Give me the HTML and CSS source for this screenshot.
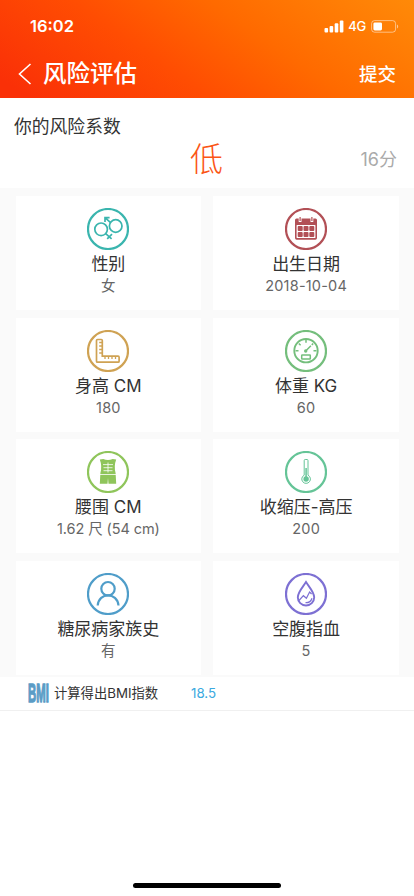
FILE: index.html
```html
<!DOCTYPE html>
<html lang="zh-CN">

<head>
    <meta charset="UTF-8">
    <meta name="viewport" content="width=device-width, initial-scale=1.0">
    <title>风险评估</title>
    <link rel="stylesheet" href="styles.css">
</head>

<body>
    <div class="page">
        <header class="header">
            <div class="status">
                <span class="time">16:02</span>
                <div class="signals">
                    <svg class="bars" width="20" height="13" viewBox="0 0 20 13" fill="#fff">
                        <rect x="0.5" y="8" width="3.6" height="4.5" rx="1" />
                        <rect x="5.6" y="6" width="3.6" height="6.5" rx="1" />
                        <rect x="10.7" y="3.3" width="3.6" height="9.2" rx="1" />
                        <rect x="15.8" y="0.5" width="3.6" height="12" rx="1" />
                    </svg>
                    <span class="network">4G</span>
                    <svg class="battery" width="28" height="13" viewBox="0 0 28 13">
                        <rect x="0.6" y="0.6" width="24" height="11.6" rx="3" fill="none" stroke="#fff" stroke-opacity="0.5" />
                        <rect x="2.4" y="2.4" width="8.6" height="8" rx="1.4" fill="#fff" />
                        <path d="M26 4.4c1.6.6 1.6 3.4 0 4z" fill="#fff" fill-opacity="0.55" />
                    </svg>
                </div>
            </div>
            <div class="nav">
                <svg class="back" width="14" height="22" viewBox="0 0 14 22" fill="none" stroke="#fff" stroke-width="1.6">
                    <path d="M12.5 1L1.5 11l11 10" />
                </svg>
                <h1>风险评估</h1>
                <span class="submit">提交</span>
            </div>
        </header>

        <section class="risk">
            <h2>你的风险系数</h2>
            <div class="result">
                <span class="level">低</span>
                <span class="score">16分</span>
            </div>
        </section>

        <section class="grid">
            <div class="card">
                <svg class="icon teal" viewBox="0 0 42 42">
                    <circle cx="21" cy="21" r="20" />
                    <g stroke-width="1.7">
                        <circle cx="14.1" cy="21.3" r="6.3" />
                        <circle cx="28.7" cy="18" r="6.3" />
                        <path d="M18 9.7l5.6 4.9M18 14v-4.3h4.6M18.4 25.4l6.2 5.5M20.2 30.8l4.8-4.6" />
                    </g>
                </svg>
                <h3>性别</h3>
                <p>女</p>
            </div>
            <div class="card">
                <svg class="icon red" viewBox="0 0 42 42">
                    <circle cx="21" cy="21" r="20" />
                    <path class="solid" d="M11.5 10.5h2.2v3.4h2.8v-3.4h9v3.4h2.8v-3.4h2.2q1.5 0 1.5 1.5v18q0 1.7-1.7 1.7H11.7q-1.7 0-1.7-1.7V12q0-1.5 1.5-1.5z" />
                    <path class="solid" d="M14.5 9h1.2v4h-1.2zM26.3 9h1.2v4h-1.2z" />
                    <rect class="paper" x="11.6" y="17" width="18.8" height="13" rx="0.5" />
                    <g class="solid">
                        <rect x="12.7" y="18" width="5" height="5" rx="1" />
                        <rect x="18.5" y="18" width="5" height="5" rx="1" />
                        <rect x="24.3" y="18" width="5" height="5" rx="1" />
                        <rect x="12.7" y="24" width="5" height="5" rx="1" />
                        <rect x="18.5" y="24" width="5" height="5" rx="1" />
                        <rect x="24.3" y="24" width="5" height="5" rx="1" />
                    </g>
                </svg>
                <h3>出生日期</h3>
                <p>2018-10-04</p>
            </div>
            <div class="card">
                <svg class="icon gold" viewBox="0 0 42 42">
                    <circle cx="21" cy="21" r="20" />
                    <path stroke-width="1.7" d="M10.5 9.5h3.8q1 0 1 1v15.7h15.8q1 0 1 1v4q0 1-1 1H10.500q-1 0-1-1V10.500q0-1 1-1z" />
                    <path stroke-width="1.3" d="M15 12.5h-2.8M15 16h-2.8M15 19.5h-2.8M15 23h-2.8M18 26.5v2.6M21.5 26.5v2.6M25 26.5v2.6M28.5 26.5v2.6" />
                </svg>
                <h3>身高 CM</h3>
                <p>180</p>
            </div>
            <div class="card">
                <svg class="icon green" viewBox="0 0 42 42">
                    <circle cx="21" cy="21" r="20" />
                    <circle cx="21" cy="20.7" r="11.7" stroke-width="1.9" />
                    <path stroke-width="1.5" d="M21 10v2.8M10.5 20.7h3M28.5 20.7h3M13.8 13.5l1.8 1.8M28.2 13.5l-1.4 1.4M20.7 21l5.2-5.2" />
                    <circle class="solid" cx="20.7" cy="21" r="1.7" />
                    <rect x="16.7" y="25" width="8.6" height="4" rx="0.5" stroke-width="1.5" />
                </svg>
                <h3>体重 KG</h3>
                <p>60</p>
            </div>
            <div class="card">
                <svg class="icon lime" viewBox="0 0 42 42">
                    <circle cx="21" cy="21" r="20" />
                    <path class="solid" d="M12.8 8.5l3.5-.5q4.7 2 9.4 0l3.5.5q-2.5 6.5-.6 13.5l.6 10.8h-7.7L21 27l-.5 5.8h-7.7l.6-10.8q1.9-7-.6-13.5z" />
                    <path class="cut" d="M13 23.5h16M21 11.5v10M16 13.6h10M16.5 16.7h9M16.5 19.7h9" />
                </svg>
                <h3>腰围 CM</h3>
                <p class="size">1.62 尺 (54 cm)</p>
            </div>
            <div class="card">
                <svg class="icon mint" viewBox="0 0 42 42">
                    <circle cx="21" cy="21" r="20" />
                    <path stroke-width="1" d="M19.2 24.2V9.5q0-1 1-1h1.8q1 0 1 1v14.7a4.3 4.3 0 1 1-3.8 0z" />
                    <circle class="solid" cx="21.1" cy="28" r="2.7" />
                    <path stroke-width="1.5" d="M21.1 17v9" />
                </svg>
                <h3>收缩压-高压</h3>
                <p>200</p>
            </div>
            <div class="card">
                <svg class="icon blue" viewBox="0 0 42 42">
                    <circle cx="21" cy="21" r="20" />
                    <g stroke-width="2.2">
                        <circle cx="21" cy="15.7" r="6.7" />
                        <path d="M10.7 32.5c1-13.5 19.6-13.5 20.8 0" />
                    </g>
                </svg>
                <h3>糖尿病家族史</h3>
                <p>有</p>
            </div>
            <div class="card">
                <svg class="icon purple" viewBox="0 0 42 42">
                    <circle cx="21" cy="21" r="20" />
                    <path stroke-width="1.9" d="M21 9c3 5 8.2 10 8.2 15.3a8.2 8.2 0 0 1-16.4 0C12.8 19 18 14 21 9z" />
                    <path stroke-width="1.2" d="M14 27.5l4.4-4.8 3 2.6 3.2-6.3 2 2M20.5 29.7q5 .3 6.5-4.5" />
                </svg>
                <h3>空腹指血</h3>
                <p>5</p>
            </div>
        </section>

        <section class="bmi">
            <span class="bmi-logo"><b>BMI</b></span>
            <span class="bmi-label">计算得出BMI指数</span>
            <span class="bmi-value">18.5</span>
        </section>

        <div class="home-bar"></div>
    </div>
</body>

</html>
```

FILE: styles.css
```css
* {
    box-sizing: border-box;
}

body {
    margin: 0;
    font-family: Inter, "Noto Sans CJK SC", sans-serif;
    background-color: #fff;
    color: #333;
}

h1,
h2,
h3,
p {
    margin: 0;
    font-weight: 400;
}

.page {
    display: flex;
    flex-direction: column;
    height: 896px;
    overflow: hidden;
}

.header {
    height: 98px;
    flex: none;
    color: #fff;
    background: linear-gradient(35deg, #fa3007 5%, #ff4d02 38%, #ff6a00 63%, #ff8a08 100%);
}

.status {
    display: flex;
    justify-content: space-between;
    align-items: center;
    height: 50px;
    padding: 2px 15px 0 30px;
}

.time {
    font-size: 16.5px;
    font-weight: 600;
}

.signals {
    display: flex;
    align-items: center;
}

.network {
    margin: 0 5px 0 4px;
    font-size: 13px;
    font-weight: 500;
    letter-spacing: -0.3px;
}

.nav {
    display: flex;
    align-items: center;
    height: 47px;
    padding: 0 18px;
}

.nav h1 {
    flex: 1;
    margin-left: 11px;
    font-size: 23.5px;
    font-weight: 500;
    line-height: 34px;
}

.submit {
    font-size: 18.5px;
    font-weight: 500;
    line-height: 28px;
}

.risk {
    height: 90px;
    flex: none;
    padding: 16px 17px 0 14px;
}

.risk h2 {
    font-size: 17.8px;
    line-height: 26px;
}

.result {
    display: grid;
    grid-template-columns: 1fr auto 1fr;
    align-items: center;
    height: 38px;
}

.level {
    grid-column: 2;
    padding-left: 2px;
    font-size: 33px;
    font-weight: 300;
    line-height: 38px;
    color: #fb5516;
}

.score {
    justify-self: end;
    font-size: 18px;
    line-height: 26px;
    padding-top: 2px;
    color: #aaa;
}

.grid {
    display: grid;
    grid-template-columns: 1fr 1fr;
    grid-auto-rows: 114px;
    gap: 7.5px 12px;
    flex: none;
    height: 489px;
    padding: 8px 15px 0 15.5px;
    background-color: #fafafa;
}

.card {
    display: flex;
    flex-direction: column;
    align-items: center;
    padding-top: 12px;
    background-color: #fff;
}

.card h3 {
    margin-top: 2px;
    font-size: 17px;
    line-height: 24px;
}

.card p {
    font-size: 14.5px;
    line-height: 20px;
    letter-spacing: 0.2px;
    color: #666;
}

.card .size {
    letter-spacing: -0.1px;
}

.icon {
    width: 42px;
    height: 42px;
    flex: none;
    fill: none;
    stroke: currentColor;
    stroke-width: 2.2;
}

.icon .solid {
    fill: currentColor;
    stroke: none;
}

.icon .paper {
    fill: #fff;
    stroke: none;
}

.icon .cut {
    stroke: #fff;
    stroke-width: 0.8;
}

.teal { color: #3ab5ae; }
.red { color: #b25056; }
.gold { color: #cfa253; }
.green { color: #74be7c; }
.lime { color: #8fc55b; }
.mint { color: #65c497; }
.blue { color: #4f9dc9; }
.purple { color: #7d70d3; }

.bmi {
    display: flex;
    align-items: center;
    height: 34px;
    flex: none;
    padding: 0 0 2px 28px;
    border-bottom: 1px solid #f0f0f0;
    font-size: 13.3px;
}

.bmi-logo {
    width: 26px;
    font-family: "Liberation Sans", sans-serif;
    color: #5b9cc6;
}

.bmi-logo b {
    display: inline-block;
    font-size: 21px;
    line-height: 24px;
    transform: scale(0.54, 1.25);
    transform-origin: 0 50%;
    -webkit-text-stroke: 1.2px #5b9cc6;
}

.bmi-label {
    width: 137px;
    line-height: 20px;
}

.bmi-value {
    color: #3ba9e0;
}

.home-bar {
    width: 148px;
    height: 5px;
    margin: auto auto 8px;
    border-radius: 3px;
    background-color: #000;
}
```
